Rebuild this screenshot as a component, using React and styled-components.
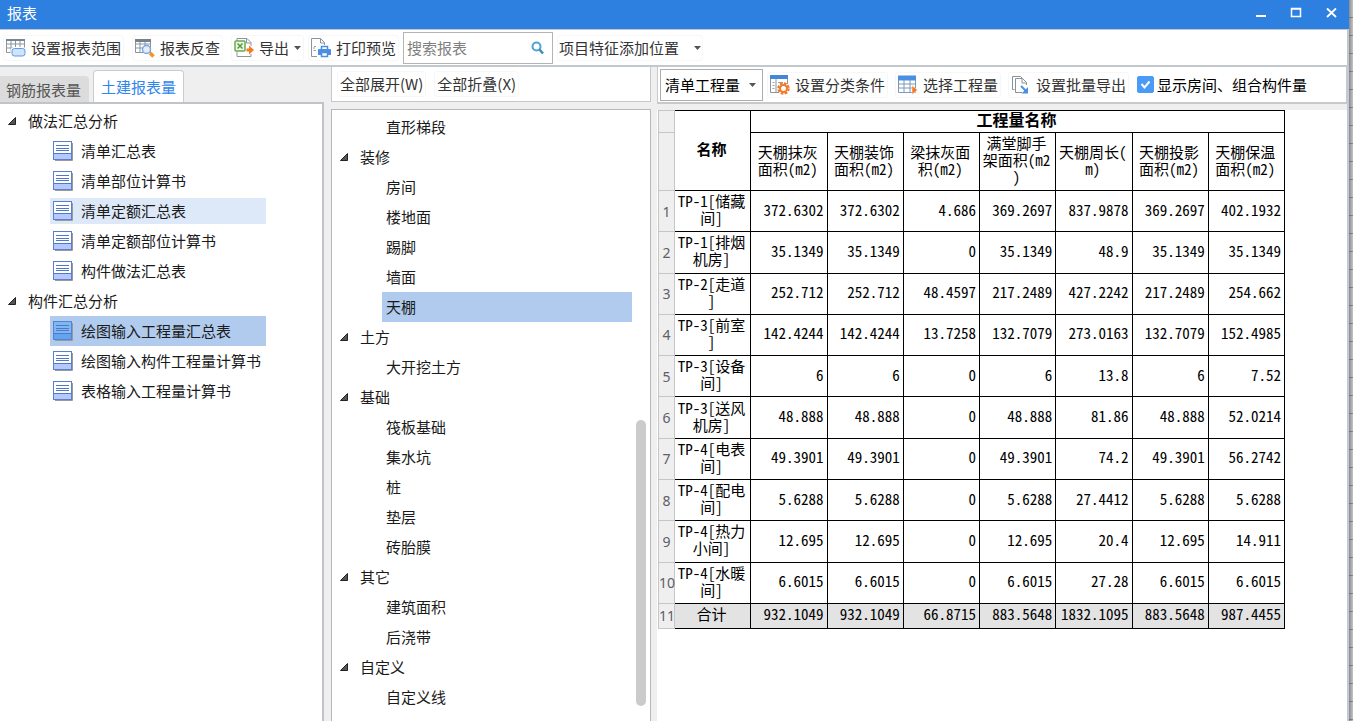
import React, { useState } from "react";
import styled, { createGlobalStyle } from "styled-components";

const GlobalStyle = createGlobalStyle`
  * {
    box-sizing: border-box;
  }

  body {
    margin: 0;
    font-family: "Noto Sans CJK SC", sans-serif;
    font-size: 15px;
    line-height: 20px;
    color: #1a1a1a;
    overflow: hidden;
  }

  button,
  input,
  select {
    font: inherit;
    color: inherit;
  }
`;

const Desktop = styled.div`
  display: flex;
  height: 100vh;
`;

const Window = styled.div`
  flex: 1;
  min-width: 0;
  display: flex;
  flex-direction: column;
  background-color: #efefef;
`;

// Faixa da janela que fica atrás
const Behind = styled.div`
  width: 4px;
  background:
    linear-gradient(90deg, rgba(70, 75, 85, 0.5), rgba(120, 120, 120, 0.1)),
    repeating-linear-gradient(#cdcdcd 0 17px, #8c8c8c 17px 18px);
`;

const TitleBar = styled.header`
  display: flex;
  align-items: center;
  justify-content: space-between;
  height: 29px;
  padding: 0 10px 4px 7px;
  background-color: #2d7fe0;
  color: #fff;
`;

const Title = styled.h1`
  margin: 0;
  font-size: 15px;
  font-weight: 400;
`;

const WindowControls = styled.div`
  display: flex;
  gap: 20px;
`;

const ControlButton = styled.button`
  display: flex;
  width: 15px;
  padding: 0;
  border: 0;
  background: none;
  cursor: pointer;
`;

const Toolbar = styled.div`
  display: flex;
  align-items: center;
  gap: 4px;
  height: 38px;
  padding: 0 3px;
  background-color: #fff;
  border: 1px solid #c3c8cd;
  border-width: 1px 2px 2px 0;
`;

const ToolGroup = styled.div`
  display: flex;
  align-items: center;
  gap: ${(props) => (props.$tight ? "7px" : "8px")};
`;

const ToolButton = styled.button`
  display: flex;
  align-items: center;
  gap: ${(props) => (props.$wide ? "15px" : "5px")};
  height: 26px;
  padding: 0 ${(props) => (props.$wide ? "1px" : "2px")};
  border: 1px solid #f7f7f7;
  border-radius: 3px;
  background: none;
  color: #333;
  white-space: nowrap;
  cursor: pointer;

  &:hover {
    background-color: #e8f1fc;
  }
`;

const SearchBox = styled.label`
  display: flex;
  align-items: center;
  width: 150px;
  height: 32px;
  padding: 0 8px 0 3px;
  border: 1px solid #b4b4b4;
  background-color: #fff;
`;

const SearchInput = styled.input`
  flex: 1;
  min-width: 0;
  padding: 0;
  border: 0;
  outline: 0;

  &::placeholder {
    color: #808080;
    opacity: 1;
  }
`;

const Body = styled.main`
  flex: 1;
  min-height: 0;
  display: flex;
`;

const SidePane = styled.aside`
  display: flex;
  flex-direction: column;
  width: 324px;
`;

const Tabs = styled.div`
  display: flex;
  align-items: flex-end;
  gap: 4px;
  height: 35px;
`;

const Tab = styled.button`
  height: ${(props) => (props.$active ? "32px" : "26px")};
  padding: 0 7px 0 ${(props) => (props.$active ? "7px" : "6px")};
  border: 1px solid ${(props) => (props.$active ? "#c9cdd1" : "#dcdcdc")};
  border-bottom: 0;
  border-left-width: ${(props) => (props.$active ? "1px" : "0")};
  border-radius: ${(props) => (props.$active ? "4px 4px 0 0" : "0 4px 0 0")};
  background-color: ${(props) => (props.$active ? "#fff" : "#dcdcdc")};
  color: ${(props) => (props.$active ? "#2f86ee" : "#555")};
  white-space: nowrap;
  cursor: pointer;
`;

const ReportPanel = styled.div`
  flex: 1;
  min-height: 0;
  overflow: hidden;
  padding-top: 2px;
  background-color: #fff;
  border: 2px solid #c0c3c7;
  border-width: 2px 2px 0 0;
`;

const Tree = styled.ul`
  margin: 0;
  padding: 0;
  list-style: none;
`;

const GroupRow = styled.div`
  display: flex;
  align-items: center;
  gap: 12px;
  height: 30px;
  padding-left: 8px;
`;

const ReportRow = styled.li`
  display: flex;
  align-items: center;
  gap: 8px;
  height: ${(props) => (props.$hovered ? "26px" : "30px")};
  margin: ${(props) => (props.$hovered ? "2px" : "0")} 56px
    ${(props) => (props.$hovered ? "2px" : "0")} 50px;
  padding-left: 3px;
  background-color: ${(props) =>
    props.$selected ? "#b0cbed" : props.$hovered ? "#dde8f8" : "transparent"};
  white-space: nowrap;
  cursor: default;
`;

const ComponentPane = styled.section`
  display: flex;
  flex-direction: column;
  gap: 7px;
  width: 320px;
  margin: 0 6px 0 7px;
`;

const ExpandBar = styled.div`
  display: flex;
  align-items: center;
  gap: 8px;
  height: 35px;
  padding: 0 5px;
  background-color: #fff;
  border: 1px solid #c3c8cd;
  border-top: 0;
`;

const ComponentPanel = styled.div`
  flex: 1;
  min-height: 0;
  display: flex;
  padding-right: 4px;
  background-color: #fff;
  border: 1px solid #b8b8b8;
  border-bottom: 0;
  overflow: hidden;
`;

const ComponentTree = styled(Tree)`
  flex: 1;
  padding-top: 2px;
`;

const ComponentRow = styled.li`
  height: 30px;
  margin: 0 4px 0 50px;
  padding: 5px 4px 0;
  background-color: ${(props) => (props.$selected ? "#b0cbed" : "transparent")};
  cursor: default;
`;

const ScrollTrack = styled.div`
  display: flex;
  flex-direction: column;
  justify-content: flex-end;
  width: 10px;
  padding-bottom: 15px;
`;

const ScrollThumb = styled.div`
  height: 48%;
  border-radius: 5px;
  background-color: #cbcbcb;
`;

const DataPane = styled.section`
  flex: 1;
  min-width: 0;
  display: flex;
  flex-direction: column;
  gap: 6px;
  border-right: 2px solid #c3cad6;
`;

const DataBar = styled.div`
  display: flex;
  align-items: center;
  gap: 4px;
  height: 37px;
  padding: 0 2px;
  background-color: #fff;
  border: 1px solid #c9c9c9;
  border-width: 0 1px 2px 1px;
`;

const SelectBox = styled.label`
  display: flex;
  align-items: center;
  width: 103px;
  height: 32px;
  padding: 0 6px 0 4px;
  border: 1px solid #adadad;
  background-color: #fff;
`;

const Select = styled.select`
  flex: 1;
  min-width: 0;
  padding: 0;
  border: 0;
  outline: 0;
  background: none;
  appearance: none;
  color: #000;
`;

const CheckLabel = styled.label`
  display: flex;
  align-items: center;
  gap: 3px;
  margin-left: 4px;
  color: #000;
  white-space: nowrap;
`;

const Checkbox = styled.input`
  appearance: none;
  width: 17px;
  height: 17px;
  margin: 0;
  border: 1px solid #4a9bf5;
  border-radius: 2px;
  background-color: #fff;

  &:checked {
    background: #4a9bf5
      url("data:image/svg+xml,%3Csvg xmlns='http://www.w3.org/2000/svg' viewBox='0 0 15 15'%3E%3Cpath d='M3.5 7l3 3.5 5-6' fill='none' stroke='white' stroke-width='2'/%3E%3C/svg%3E")
      center no-repeat;
  }
`;

const Sheet = styled.div`
  flex: 1;
  min-height: 0;
  background-color: #fff;
  padding-left: 1px;
`;

const Table = styled.table`
  width: 627px;
  height: 519px;
  table-layout: fixed;
  border-collapse: separate;
  border-spacing: 0;
  color: #000;
  line-height: 17px;
  font-feature-settings: "hwid";
`;

const HeadCell = styled.th`
  padding: 0 4px 4px 2px;
  border: 1px solid #000;
  border-width: ${(props) => (props.$top ? "1px" : "0")} 1px 1px 0;
  font-size: ${(props) => (props.$large ? "16px" : "15px")};
  font-weight: ${(props) => (props.$bold ? 700 : 400)};
  line-break: anywhere;
`;

const Row = styled.tr`
  height: ${(props) => props.$height || 41}px;
  background-color: ${(props) => (props.$total ? "#e3e3e3" : "#fff")};
`;

const NumberCell = styled.th`
  width: 17px;
  padding: 0;
  border: 1px solid #c6c6c6;
  border-width: ${(props) => (props.$top ? "1px" : "0")} 1px 1px 1px;
  background-color: #efefef;
  color: #5c6068;
  font-family: "Noto Sans", sans-serif;
  font-size: 14px;
  font-weight: 400;
  font-feature-settings: normal;
  white-space: nowrap;
`;

const NameCell = styled.td`
  padding: 0 4px 4px 2px;
  border: 1px solid #000;
  border-width: 0 1px 1px 0;
  text-align: center;
  line-break: anywhere;
`;

const ValueCell = styled.td`
  padding: 0 3px 4px 0;
  border: 1px solid #000;
  border-width: 0 1px 1px 0;
  text-align: right;
  white-space: nowrap;
`;

const Icon = ({ size = 20, children }) => (
  <svg width={size} height={size} viewBox={`0 0 ${size} ${size}`} fill="none" aria-hidden="true">
    {children}
  </svg>
);

const RangeIcon = () => (
  <Icon>
    <path d="M.5 1.500h18v13H.5zM.5 6h18M.5 10h18M5 1.500v13M9.500 1.500v13M14 1.500v13" stroke="#8a959d" />
    <path d="M0 2h19" stroke="#7a868f" strokeWidth="2" />
    <rect x="6" y="10.500" width="13" height="7.500" rx="2.500" fill="#cfe3fb" stroke="#fff" strokeWidth="3" />
    <rect x="6" y="10.500" width="13" height="7.500" rx="2.500" fill="#cfe3fb" stroke="#5c9ae6" />
  </Icon>
);

const LookupIcon = () => (
  <Icon>
    <path d="M.5 1.500h15v13H.5zM.5 6h15M.5 10h15M5 1.500v13M10 1.500v13" stroke="#8a959d" />
    <path d="M0 2.500h16" stroke="#75828b" strokeWidth="3" />
    <circle cx="11.500" cy="11.500" r="4" fill="#e3edfb" stroke="#7ba6ea" strokeWidth="1.500" />
    <path d="M15 15l3.500 3.500" stroke="#f7941e" strokeWidth="3.500" />
  </Icon>
);

const ExportIcon = () => (
  <Icon>
    <path d="M3 3V.5h10l4 4V8M3 14v4.500h14V16" stroke="#8a959d" />
    <path d="M12.500.5v4.500H17" stroke="#8a959d" />
    <rect x="1" y="3" width="10" height="10" rx="1" fill="#eef7ea" stroke="#6bab4b" strokeWidth="1.500" />
    <path d="M3.500 5.500l5 5M8.500 5.500l-5 5" stroke="#57993a" strokeWidth="1.500" />
    <path d="M12.500 10.500H15V7.500l5 4.500-5 4.500v-3h-2.500z" fill="#f47b20" />
  </Icon>
);

const PrintIcon = () => (
  <Icon>
    <path d="M6 18.500H.5v-18h9l4 4V7M9.500.5v4.500h4" stroke="#8a959d" />
    <path d="M3 8.500h2M3 12.500h2M3 9v4" stroke="#98a2a9" strokeDasharray="2 1" />
    <path d="M10.500 8.500h6V12h-6z" fill="#fff" stroke="#4a90e2" strokeWidth="1.500" />
    <path d="M8 11h11a1 1 0 0 1 1 1v5H7v-5a1 1 0 0 1 1-1z" fill="#4a90e2" />
    <path d="M10.500 14.500h6v4h-6z" fill="#fff" stroke="#4a90e2" strokeWidth="1.500" />
  </Icon>
);

const SearchIcon = () => (
  <Icon size={13}>
    <circle cx="5.500" cy="5.500" r="4" stroke="#4da3d4" strokeWidth="2" />
    <path d="M8.500 8.500l3.500 4" stroke="#3c8fc4" strokeWidth="2.500" />
  </Icon>
);

const ClassifyIcon = () => (
  <Icon>
    <path d="M.5 1v16.500H9M17.500 1v8M6 4v13" stroke="#8a959d" />
    <path d="M0 2h18" stroke="#4287dc" strokeWidth="4" />
    <path d="M2.500 7.500h2M2.500 10.500h2M2.500 13.500h2M8 7.500h5" stroke="#98a2a9" />
    <circle cx="13.500" cy="13.500" r="5" stroke="#f07c2b" strokeWidth="2.500" strokeDasharray="2.600 1.300" />
    <circle cx="13.500" cy="13.500" r="3.500" fill="#fff" stroke="#f07c2b" strokeWidth="2" />
  </Icon>
);

const ChooseIcon = () => (
  <Icon>
    <path d="M.5 1v16.500h17V1M.5 9h17M.5 13h17M6 5v12M12 5v12" stroke="#7e98b5" />
    <path d="M0 3h18" stroke="#4a90e2" strokeWidth="5" />
    <path d="M14 10.500v9l5.500-4.500z" fill="#f47b20" stroke="#fff" strokeWidth=".5" />
  </Icon>
);

const BatchIcon = () => (
  <Icon>
    <path d="M3.500 14.500h-2v-13h8l2 2" stroke="#86939a" />
    <path d="M11 17.500H4.500v-14h7l4 4V10M11 3.500V8h4.500" stroke="#86939a" />
    <path d="M10 11l5 5" stroke="#4a90e2" strokeWidth="2" />
    <path d="M17 12v6.500h-6.500z" fill="#4a90e2" />
  </Icon>
);

const ReportIcon = ({ selected }) => (
  <Icon>
    <path d="M2 19.500h17.500V2" stroke="#9a9a9a" />
    <rect x=".5" y=".5" width="18" height="18" fill={selected ? "#7db8f2" : "#fff"} stroke="#5a80d0" />
    <path d="M1 13h17v5H1z" fill={selected ? "#63a4ee" : "#b7c9fa"} />
    <path d="M1 12.500h17M3 4.500h13M3 7.500h13M3 9.500h13" stroke="#4f78cc" />
  </Icon>
);

const DownArrow = () => (
  <svg width="7" height="4" viewBox="0 0 7 4" aria-hidden="true">
    <path d="M0 0h7L3.500 4z" fill="#555" />
  </svg>
);

const GroupArrow = () => (
  <svg width="8" height="8" viewBox="0 0 8 8" aria-hidden="true">
    <path d="M7.500.5v7H.5z" fill="#555" stroke="#222" />
  </svg>
);

const reports = [
  {
    title: "做法汇总分析",
    items: ["清单汇总表", "清单部位计算书", "清单定额汇总表", "清单定额部位计算书", "构件做法汇总表"],
  },
  {
    title: "构件汇总分析",
    items: ["绘图输入工程量汇总表", "绘图输入构件工程量计算书", "表格输入工程量计算书"],
  },
];

const components = [
  { items: ["直形梯段"] },
  { title: "装修", items: ["房间", "楼地面", "踢脚", "墙面", "天棚"] },
  { title: "土方", items: ["大开挖土方"] },
  { title: "基础", items: ["筏板基础", "集水坑", "桩", "垫层", "砖胎膜"] },
  { title: "其它", items: ["建筑面积", "后浇带"] },
  { title: "自定义", items: ["自定义线"] },
];

const columns = [
  "天棚抹灰面积(m2)",
  "天棚装饰面积(m2)",
  "梁抹灰面积(m2)",
  "满堂脚手架面积(m2)",
  "天棚周长(m)",
  "天棚投影面积(m2)",
  "天棚保温面积(m2)",
];

const rows = [
  ["TP-1[储藏间]", "372.6302", "372.6302", "4.686", "369.2697", "837.9878", "369.2697", "402.1932"],
  ["TP-1[排烟机房]", "35.1349", "35.1349", "0", "35.1349", "48.9", "35.1349", "35.1349"],
  ["TP-2[走道]", "252.712", "252.712", "48.4597", "217.2489", "427.2242", "217.2489", "254.662"],
  ["TP-3[前室]", "142.4244", "142.4244", "13.7258", "132.7079", "273.0163", "132.7079", "152.4985"],
  ["TP-3[设备间]", "6", "6", "0", "6", "13.8", "6", "7.52"],
  ["TP-3[送风机房]", "48.888", "48.888", "0", "48.888", "81.86", "48.888", "52.0214"],
  ["TP-4[电表间]", "49.3901", "49.3901", "0", "49.3901", "74.2", "49.3901", "56.2742"],
  ["TP-4[配电间]", "5.6288", "5.6288", "0", "5.6288", "27.4412", "5.6288", "5.6288"],
  ["TP-4[热力小间]", "12.695", "12.695", "0", "12.695", "20.4", "12.695", "14.911"],
  ["TP-4[水暖间]", "6.6015", "6.6015", "0", "6.6015", "27.28", "6.6015", "6.6015"],
  ["合计", "932.1049", "932.1049", "66.8715", "883.5648", "1832.1095", "883.5648", "987.4455"],
];

const QuantityTable = () => (
  <Table>
    <colgroup>
      <col style={{ width: 17 }} />
      <col span="8" />
    </colgroup>
    <thead>
      <Row $height={23}>
        <NumberCell $top />
        <HeadCell $top $bold rowSpan="2">名称</HeadCell>
        <HeadCell $top $bold $large colSpan={columns.length}>工程量名称</HeadCell>
      </Row>
      <Row $height={58}>
        <NumberCell />
        {columns.map((column) => (
          <HeadCell key={column}>{column}</HeadCell>
        ))}
      </Row>
    </thead>
    <tbody>
      {rows.map(([name, ...values], i) => {
        const total = name === "合计";
        return (
          <Row key={name} $total={total} $height={total ? 25 : 41}>
            <NumberCell>{i + 1}</NumberCell>
            <NameCell>{name}</NameCell>
            {values.map((value, j) => (
              <ValueCell key={j}>{value}</ValueCell>
            ))}
          </Row>
        );
      })}
    </tbody>
  </Table>
);

const App = () => {
  const [tab, setTab] = useState("土建报表量");
  const [report, setReport] = useState("绘图输入工程量汇总表");
  const [component, setComponent] = useState("天棚");
  const [showRooms, setShowRooms] = useState(true);

  return (
    <>
      <GlobalStyle />
      <Desktop>
        <Window>
          <TitleBar>
            <Title>报表</Title>
            <WindowControls>
              <ControlButton aria-label="最小化">
                <Icon size={15}>
                  <path d="M2 11h10" stroke="#fff" strokeWidth="2" />
                </Icon>
              </ControlButton>
              <ControlButton aria-label="最大化">
                <Icon size={15}>
                  <path d="M2.500 3.500h9v8h-9zM2 4h10" stroke="#fff" strokeWidth="1.500" />
                </Icon>
              </ControlButton>
              <ControlButton aria-label="关闭">
                <Icon size={15}>
                  <path d="M3 3.500l9 8.500M12 3.500L3 12" stroke="#fff" strokeWidth="1.800" />
                </Icon>
              </ControlButton>
            </WindowControls>
          </TitleBar>

          <Toolbar>
            <ToolGroup>
              <ToolButton><RangeIcon />设置报表范围</ToolButton>
              <ToolButton><LookupIcon />报表反查</ToolButton>
              <ToolButton><ExportIcon />导出<DownArrow /></ToolButton>
            </ToolGroup>
            <ToolButton><PrintIcon />打印预览</ToolButton>
            <SearchBox>
              <SearchInput type="text" placeholder="搜索报表" aria-label="搜索报表" />
              <SearchIcon />
            </SearchBox>
            <ToolButton $wide>项目特征添加位置<DownArrow /></ToolButton>
          </Toolbar>

          <Body>
            <SidePane>
              <Tabs>
                {["钢筋报表量", "土建报表量"].map((name) => (
                  <Tab key={name} $active={tab === name} onClick={() => setTab(name)}>
                    {name}
                  </Tab>
                ))}
              </Tabs>
              <ReportPanel>
                {reports.map((group) => (
                  <Tree key={group.title}>
                    <li>
                      <GroupRow><GroupArrow />{group.title}</GroupRow>
                    </li>
                    {group.items.map((item) => (
                      <ReportRow
                        key={item}
                        $selected={item === report}
                        $hovered={item === "清单定额汇总表"}
                        onClick={() => setReport(item)}
                      >
                        <ReportIcon selected={item === report} />
                        {item}
                      </ReportRow>
                    ))}
                  </Tree>
                ))}
              </ReportPanel>
            </SidePane>

            <ComponentPane>
              <ExpandBar>
                <ToolButton>全部展开(W)</ToolButton>
                <ToolButton>全部折叠(X)</ToolButton>
              </ExpandBar>
              <ComponentPanel>
                <ComponentTree>
                  {components.map((group, i) => (
                    <React.Fragment key={i}>
                      {group.title && (
                        <li>
                          <GroupRow><GroupArrow />{group.title}</GroupRow>
                        </li>
                      )}
                      {group.items.map((item) => (
                        <ComponentRow
                          key={item}
                          $selected={item === component}
                          onClick={() => setComponent(item)}
                        >
                          {item}
                        </ComponentRow>
                      ))}
                    </React.Fragment>
                  ))}
                </ComponentTree>
                <ScrollTrack>
                  <ScrollThumb />
                </ScrollTrack>
              </ComponentPanel>
            </ComponentPane>

            <DataPane>
              <DataBar>
                <SelectBox>
                  <Select aria-label="工程量类型">
                    <option>清单工程量</option>
                    <option>定额工程量</option>
                  </Select>
                  <DownArrow />
                </SelectBox>
                <ToolGroup $tight>
                  <ToolButton><ClassifyIcon />设置分类条件</ToolButton>
                  <ToolButton><ChooseIcon />选择工程量</ToolButton>
                  <ToolButton><BatchIcon />设置批量导出</ToolButton>
                </ToolGroup>
                <CheckLabel>
                  <Checkbox
                    type="checkbox"
                    checked={showRooms}
                    onChange={(e) => setShowRooms(e.target.checked)}
                  />
                  显示房间、组合构件量
                </CheckLabel>
              </DataBar>
              <Sheet>
                <QuantityTable />
              </Sheet>
            </DataPane>
          </Body>
        </Window>
        <Behind />
      </Desktop>
    </>
  );
};

export default App;
